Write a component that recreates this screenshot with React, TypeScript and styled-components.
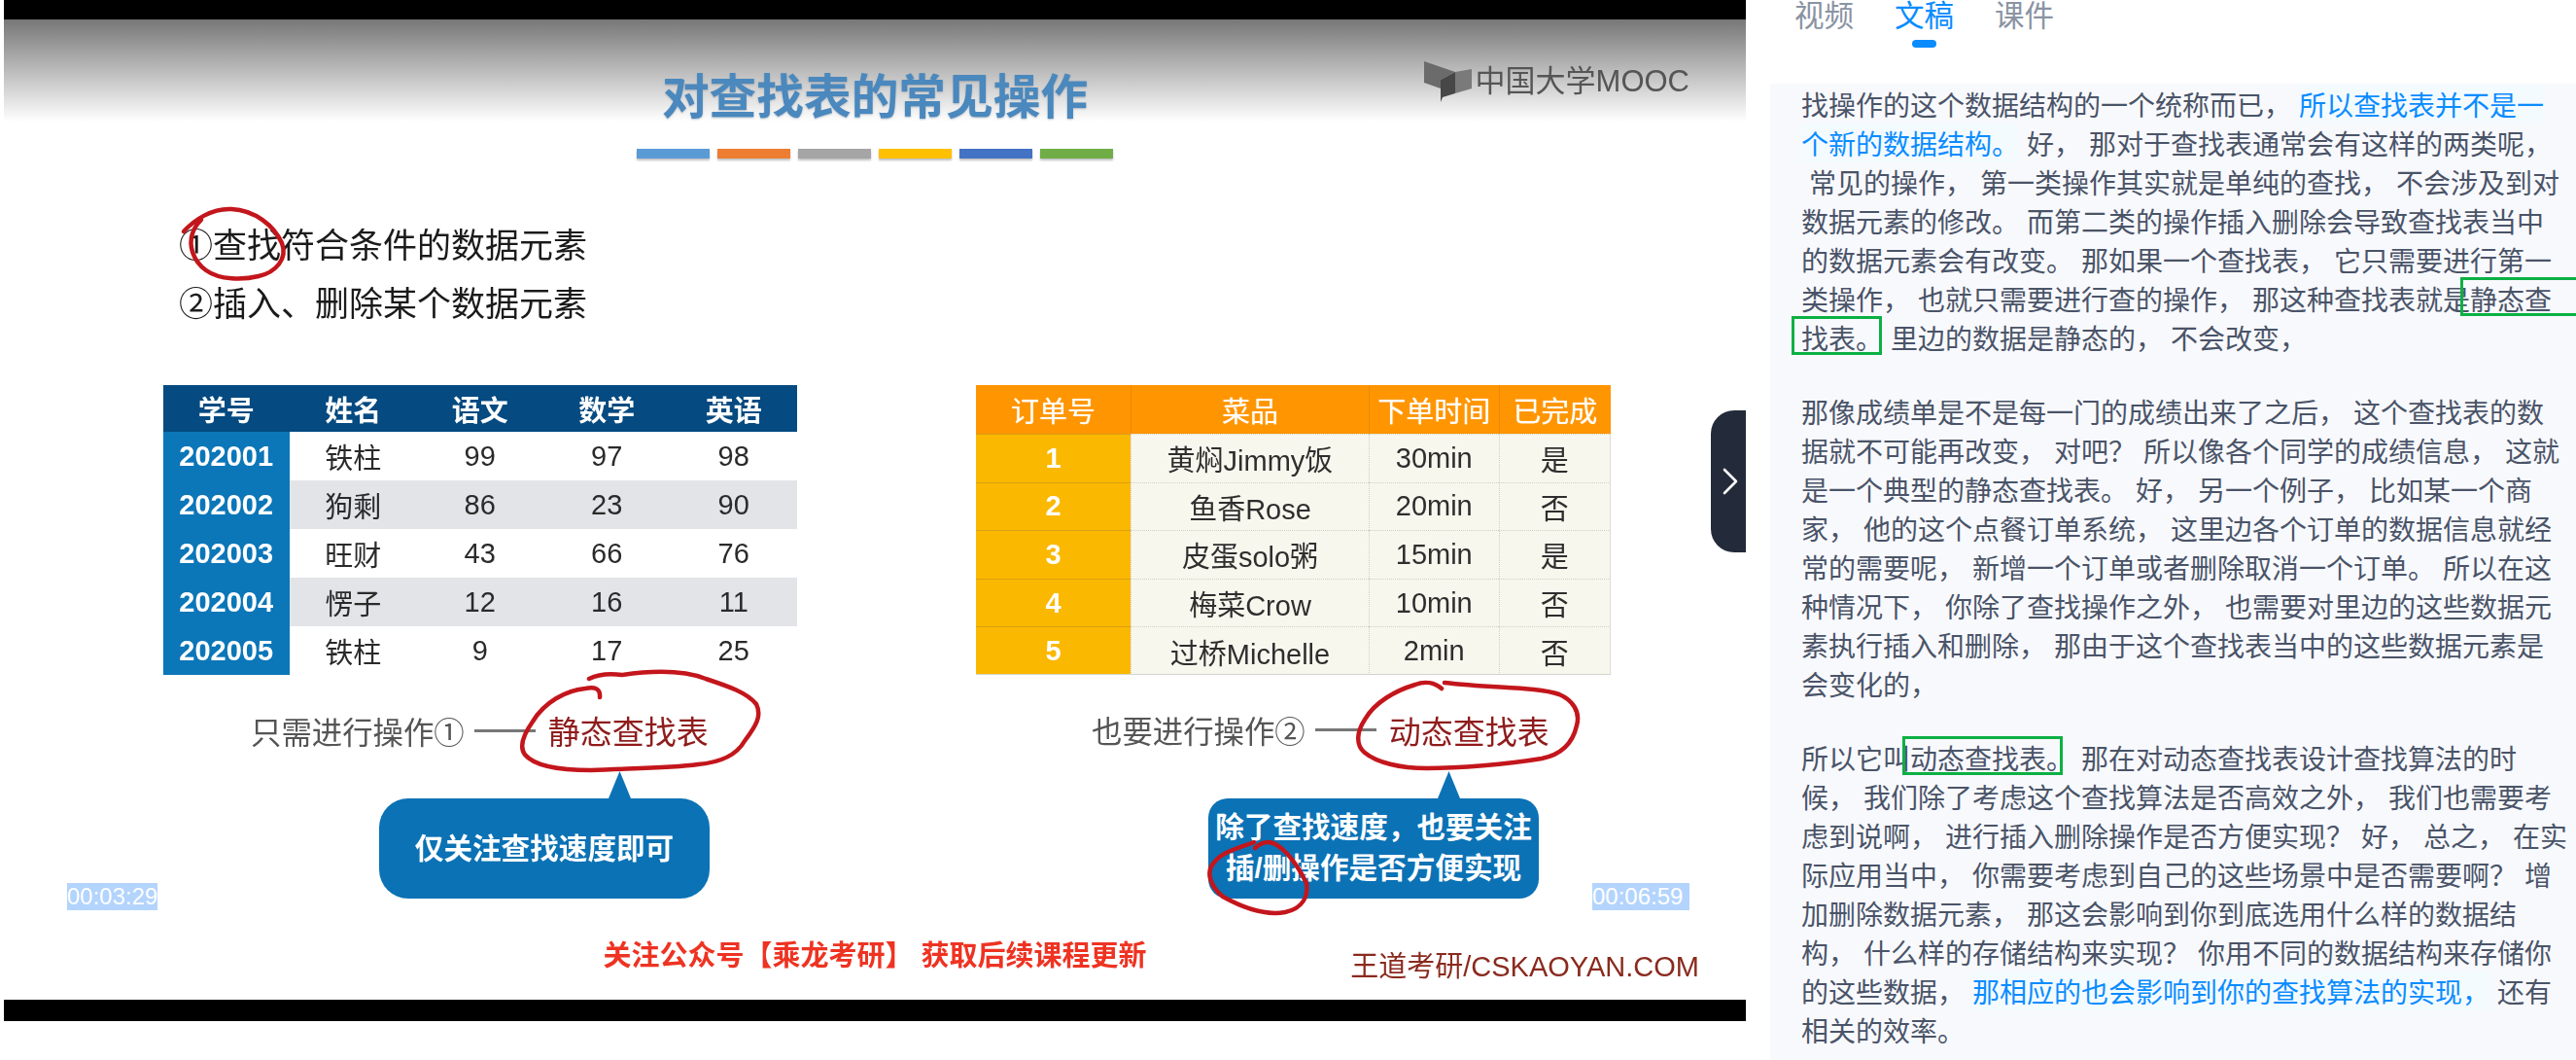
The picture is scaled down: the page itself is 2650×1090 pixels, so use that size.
import React from 'react';
import styled, { createGlobalStyle } from 'styled-components';
import { ChevronRight } from 'lucide-react';

const SLIDE_FONT = '"Liberation Sans", "Noto Sans CJK SC", sans-serif';
const PANEL_FONT = '"Noto Sans CJK SC", sans-serif';

// transcript copy is kept with ascii marks, the page shows the full width ones
const t = (s: string) => s.replace(/,/g, '\uFF0C').replace(/\?/g, '\uFF1F');

const GlobalStyle = createGlobalStyle`
  html, body {
    margin: 0;
    padding: 0;
    background: #fff;
  }
`;

const Page = styled.div`
  width: 2650px;
  height: 1090px;
  display: flex;
  overflow: hidden;
  background: #fff;
`;

const Video = styled.div`
  position: relative;
  flex: 0 0 1792px;
  height: 1050px;
  margin-left: 4px;
  box-sizing: border-box;
  border-top: 20px solid #000;
  border-bottom: 22px solid #000;
  font-family: ${SLIDE_FONT};
  background: linear-gradient(#777 0, #fff 105px);
`;

const SlideContent = styled.div`
  display: flex;
  flex-direction: column;
  height: 100%;
  filter: blur(0.6px);
`;

const SlideHeader = styled.div`
  display: grid;
  grid-template-columns: 1fr auto 1fr;
  align-items: start;
`;

const SlideTitle = styled.h1`
  margin: 56px 0 0;
  font-size: 48.7px;
  line-height: 48px;
  font-weight: 700;
  color: #4a88bd;
  text-shadow: 0 1px 2px rgba(60, 90, 120, 0.35);
`;

const Brand = styled.div`
  grid-column: 3;
  justify-self: end;
  display: flex;
  align-items: center;
  gap: 4px;
  margin: 42px 58px 0 0;
  font-size: 31px;
  line-height: 44px;
  color: #555;
  svg {
    display: block;
  }
`;

const BarRow = styled.div`
  display: flex;
  justify-content: center;
  gap: 8px;
  margin-top: 29px;
`;

const ColorBar = styled.div<{ $color: string }>`
  width: 75px;
  height: 10px;
  background: ${(p) => p.$color};
  box-shadow: 0 2px 2px rgba(0, 0, 0, 0.25);
`;

const Points = styled.ol`
  list-style: none;
  margin: 60px 0 0;
  padding: 0 0 0 180px;
  font-size: 35px;
  line-height: 60px;
  color: #1b1b1b;
`;

const Columns = styled.div`
  display: grid;
  grid-template-columns: 652.5px 653px;
  column-gap: 184px;
  margin: 53px 0 0 163.5px;
`;

const TableColumn = styled.div`
  display: flex;
  flex-direction: column;
  align-items: flex-start;
`;

const ScoreGrid = styled.div`
  display: grid;
  width: 100%;
  grid-template-columns: repeat(5, 1fr);
  grid-template-rows: 48px repeat(5, 50px);
  font-size: 29px;
  color: #2a2a2a;
`;

const ScoreHead = styled.div`
  display: flex;
  align-items: center;
  justify-content: center;
  background: #054a80;
  color: #fff;
  font-weight: 700;
`;

const ScoreId = styled.div`
  display: flex;
  align-items: center;
  justify-content: center;
  background: #0b76b8;
  color: #fff;
  font-weight: 700;
`;

const ScoreCell = styled.div<{ $shaded: boolean }>`
  display: flex;
  align-items: center;
  justify-content: center;
  background: ${(p) => (p.$shaded ? '#e3e4e8' : '#fff')};
`;

const OrderGrid = styled.div`
  display: grid;
  width: 100%;
  grid-template-columns: 159px 245px 133.5px 115.5px;
  grid-template-rows: 50px repeat(5, 49.6px);
  font-size: 29px;
  color: #2e2e2e;
`;

const OrderHead = styled.div`
  display: flex;
  align-items: center;
  justify-content: center;
  background: #ff9500;
  color: #fff;
  text-shadow: 0 0 1px rgba(255, 255, 255, 0.7);
  border-left: 1px solid #e98a08;
  &:first-child {
    border-left: none;
  }
`;

const OrderId = styled.div`
  display: flex;
  align-items: center;
  justify-content: center;
  background: #fbb800;
  color: #fff;
  font-weight: 700;
  border-top: 1px solid #d9a012;
`;

const OrderCell = styled.div`
  display: flex;
  align-items: center;
  justify-content: center;
  background: #f8f7ee;
  border-top: 1px dotted #cfcfc6;
  border-left: 1px dotted #cfcfc6;
  &:nth-child(4n) {
    border-right: 1px solid #dcdcd4;
  }
`;

const OrderFoot = styled.div`
  grid-column: 1 / -1;
  height: 1px;
  margin-top: -1px;
  background: #d4d4cc;
`;

const Caption = styled.div<{ $indent: number }>`
  display: flex;
  align-items: center;
  height: 60px;
  margin: 27px 0 40px ${(p) => p.$indent}px;
  font-size: 31.4px;
  color: #555;
  white-space: nowrap;
`;

const CaptionDash = styled.span`
  width: 63px;
  height: 3px;
  margin: 0 13px 0 10px;
  background: #777;
`;

const CaptionTerm = styled.strong`
  font-weight: 400;
  font-size: 33px;
  color: #8f1c1c;
`;

const Callout = styled.div<{ $indent: number; $radius: number }>`
  position: relative;
  box-sizing: border-box;
  width: 340px;
  height: 103px;
  margin-left: ${(p) => p.$indent}px;
  display: flex;
  align-items: center;
  justify-content: center;
  border-radius: ${(p) => p.$radius}px;
  background: #0b72b5;
  color: #fff;
  font-size: 29.6px;
  font-weight: 700;
  line-height: 42px;
  text-align: center;
  white-space: nowrap;
  &::before {
    content: '';
    position: absolute;
    left: 236px;
    top: -28px;
    width: 23px;
    height: 28px;
    background: #0b72b5;
    clip-path: polygon(50% 0, 100% 100%, 0 100%);
  }
`;

const SlideFooter = styled.div`
  display: grid;
  grid-template-columns: 1fr auto 1fr;
  align-items: start;
  margin-top: 43px;
`;

const FollowNote = styled.div`
  grid-column: 2;
  font-size: 29px;
  line-height: 32px;
  font-weight: 700;
  color: #ee3322;
  white-space: nowrap;
`;

const Credit = styled.div`
  justify-self: end;
  margin: 11px 48px 0 0;
  font-size: 29px;
  line-height: 32px;
  color: #8a2a1e;
  white-space: nowrap;
`;

const InkLayer = styled.svg`
  position: absolute;
  left: 0;
  top: -20px;
  pointer-events: none;
`;

const Timestamp = styled.span<{ $left: number; $width: number }>`
  position: absolute;
  left: ${(p) => p.$left}px;
  top: 888px;
  box-sizing: border-box;
  width: ${(p) => p.$width}px;
  height: 28px;
  background: #b3d4fd;
  color: #fff;
  font-size: 24px;
  line-height: 28px;
`;

const Handle = styled.button`
  position: absolute;
  right: 0;
  top: 402px;
  width: 36px;
  height: 146px;
  padding: 0 0 0 3px;
  border: none;
  border-radius: 24px 0 0 24px;
  background: #232a39;
  color: #fff;
  display: flex;
  align-items: center;
  justify-content: center;
  svg {
    flex-shrink: 0;
  }
`;

const Side = styled.aside`
  flex: 1;
  min-width: 0;
  font-family: ${PANEL_FONT};
`;

const Tabs = styled.nav`
  height: 86px;
  display: flex;
  gap: 42px;
  padding-left: 50px;
`;

const Tab = styled.div<{ $active?: boolean }>`
  position: relative;
  height: 28px;
  font-size: 30.5px;
  line-height: 28px;
  color: ${(p) => (p.$active ? '#0a8cff' : '#8a93a3')};
  ${(p) =>
    p.$active &&
    `&::after {
      content: '';
      position: absolute;
      left: 18px;
      top: 41px;
      width: 25px;
      height: 8px;
      border-radius: 4px;
      background: #0a8cff;
    }`}
`;

const Transcript = styled.div`
  margin-left: 24.5px;
  height: 1004px;
  box-sizing: border-box;
  padding: 1px 0 0 32.5px;
  background: #f8f9fd;
  font-size: 28px;
  line-height: 40px;
  color: #4a5468;
  word-spacing: 1.7px;
`;

const Paragraph = styled.p`
  margin: 0 0 36px;
`;

const Line = styled.div`
  white-space: pre;
`;

const Emphasis = styled.span`
  color: #0a8cff;
  background: #f4fbff;
`;

const Boxed = styled.span<{ $l: number; $r: number; $open?: boolean }>`
  position: relative;
  &::after {
    content: '';
    position: absolute;
    left: ${(p) => p.$l}px;
    right: ${(p) => p.$r}px;
    top: -2px;
    bottom: 2px;
    border: 3px solid #0cb044;
    ${(p) => p.$open && 'border-right: none;'}
    pointer-events: none;
  }
`;

const scoreRows = [
  ['202001', '铁柱', '99', '97', '98'],
  ['202002', '狗剩', '86', '23', '90'],
  ['202003', '旺财', '43', '66', '76'],
  ['202004', '愣子', '12', '16', '11'],
  ['202005', '铁柱', '9', '17', '25'],
];

const orderRows = [
  ['1', '黄焖Jimmy饭', '30min', '是'],
  ['2', '鱼香Rose', '20min', '否'],
  ['3', '皮蛋solo粥', '15min', '是'],
  ['4', '梅菜Crow', '10min', '否'],
  ['5', '过桥Michelle', '2min', '否'],
];

const barColors = ['#5b9bd5', '#ed7d31', '#a5a5a5', '#ffc000', '#4472c4', '#70ad47'];

const secondParagraph = [
  '那像成绩单是不是每一门的成绩出来了之后, 这个查找表的数',
  '据就不可能再改变, 对吧? 所以像各个同学的成绩信息, 这就',
  '是一个典型的静态查找表。 好, 另一个例子, 比如某一个商',
  '家, 他的这个点餐订单系统, 这里边各个订单的数据信息就经',
  '常的需要呢, 新增一个订单或者删除取消一个订单。 所以在这',
  '种情况下, 你除了查找操作之外, 也需要对里边的这些数据元',
  '素执行插入和删除, 那由于这个查找表当中的这些数据元素是',
  '会变化的,',
];

const thirdParagraph = [
  '候, 我们除了考虑这个查找算法是否高效之外, 我们也需要考',
  '虑到说啊, 进行插入删除操作是否方便实现? 好, 总之, 在实',
  '际应用当中, 你需要考虑到自己的这些场景中是否需要啊? 增',
  '加删除数据元素, 那这会影响到你到底选用什么样的数据结',
  '构, 什么样的存储结构来实现? 你用不同的数据结构来存储你',
];

const MoocMark = () => (
  <svg width="50" height="44" viewBox="1461 62 50 44">
    <polygon points="1462,63 1494,74 1479,82 1479,91 1462,85" fill="#6b6b6b" />
    <polygon points="1494,74 1511,71 1511,91 1494,96" fill="#7a7a7a" />
    <polygon points="1479,82 1494,74 1494,96 1481,100 1479,105" fill="#474747" />
  </svg>
);

const RedInk = () => (
  <InkLayer width="1792" height="1050" viewBox="4 0 1792 1050" fill="none" stroke="#c3161c" strokeWidth="4.5" strokeLinecap="round" strokeLinejoin="round">
    <path d="M189 238C200 226 218 214 238 215C262 216 282 232 290 250C296 266 284 280 266 284C250 288 226 288 212 278C198 268 194 252 198 240C200 234 203 230 207 226" />
    <path d="M617 717C618 708 612 706 602 708C582 710 560 722 548 742C538 756 534 768 540 776C550 788 576 792 608 792C650 790 690 790 718 786C742 784 758 776 766 762C778 746 784 736 778 724C768 712 750 706 726 698C700 688 668 690 640 694C626 692 614 694 606 698" />
    <path d="M1483 708C1476 702 1466 700 1456 704C1436 710 1414 722 1404 740C1396 752 1394 766 1404 774C1416 784 1440 790 1468 790C1500 790 1550 786 1586 780C1606 776 1618 764 1622 746C1626 732 1618 720 1604 714C1580 706 1536 708 1486 702" />
    <path d="M1291 872C1298 866 1304 864 1312 868C1326 876 1336 892 1344 908C1346 922 1340 934 1322 938C1300 942 1276 932 1258 922C1246 912 1240 898 1248 888C1256 876 1274 872 1290 866" />
  </InkLayer>
);

const App = () => (
  <Page>
    <GlobalStyle />
    <Video>
      <SlideContent>
        <SlideHeader>
          <span />
          <SlideTitle>对查找表的常见操作</SlideTitle>
          <Brand>
            <MoocMark />
            中国大学MOOC
          </Brand>
        </SlideHeader>
        <BarRow>
          {barColors.map((c) => (
            <ColorBar key={c} $color={c} />
          ))}
        </BarRow>
        <Points>
          <li>①查找符合条件的数据元素</li>
          <li>②插入、删除某个数据元素</li>
        </Points>
        <Columns>
          <TableColumn>
            <ScoreGrid>
              {['学号', '姓名', '语文', '数学', '英语'].map((h) => (
                <ScoreHead key={h}>{h}</ScoreHead>
              ))}
              {scoreRows.map((row, i) =>
                row.map((v, j) =>
                  j === 0 ? (
                    <ScoreId key={v}>{v}</ScoreId>
                  ) : (
                    <ScoreCell key={`${i}-${j}`} $shaded={i % 2 === 1}>
                      {v}
                    </ScoreCell>
                  ),
                ),
              )}
            </ScoreGrid>
            <Caption $indent={90.5}>
              只需进行操作①
              <CaptionDash />
              <CaptionTerm>静态查找表</CaptionTerm>
            </Caption>
            <Callout $indent={222.5} $radius={30}>
              仅关注查找速度即可
            </Callout>
          </TableColumn>
          <TableColumn>
            <OrderGrid>
              {['订单号', '菜品', '下单时间', '已完成'].map((h) => (
                <OrderHead key={h}>{h}</OrderHead>
              ))}
              {orderRows.map((row) =>
                row.map((v, j) =>
                  j === 0 ? (
                    <OrderId key={v}>{v}</OrderId>
                  ) : (
                    <OrderCell key={`${row[0]}-${j}`}>{v}</OrderCell>
                  ),
                ),
              )}
              <OrderFoot />
            </OrderGrid>
            <Caption $indent={119}>
              也要进行操作②
              <CaptionDash />
              <CaptionTerm>动态查找表</CaptionTerm>
            </Caption>
            <Callout $indent={239} $radius={20}>
              <div>
                {t('除了查找速度,也要关注')}
                <br />
                插/删操作是否方便实现
              </div>
            </Callout>
          </TableColumn>
        </Columns>
        <SlideFooter>
          <span />
          <FollowNote>关注公众号【乘龙考研】 获取后续课程更新</FollowNote>
          <Credit>王道考研/CSKAOYAN.COM</Credit>
        </SlideFooter>
        <RedInk />
      </SlideContent>
      <Timestamp $left={65} $width={93}>00:03:29</Timestamp>
      <Timestamp $left={1634} $width={100}>00:06:59</Timestamp>
      <Handle aria-label="收起">
        <ChevronRight size={48} strokeWidth={1.3} />
      </Handle>
    </Video>
    <Side>
      <Tabs>
        <Tab>视频</Tab>
        <Tab $active>文稿</Tab>
        <Tab>课件</Tab>
      </Tabs>
      <Transcript>
        <Paragraph>
          <Line>
            {t('找操作的这个数据结构的一个统称而已, ')}
            <Emphasis>所以查找表并不是一</Emphasis>
          </Line>
          <Line>
            <Emphasis>个新的数据结构。</Emphasis>
            {t(' 好, 那对于查找表通常会有这样的两类呢,')}
          </Line>
          <Line>{t(' 常见的操作, 第一类操作其实就是单纯的查找, 不会涉及到对')}</Line>
          <Line>数据元素的修改。 而第二类的操作插入删除会导致查找表当中</Line>
          <Line>{t('的数据元素会有改变。 那如果一个查找表, 它只需要进行第一')}</Line>
          <Line>
            {t('类操作, 也就只需要进行查的操作, 那这种查找表就是')}
            <Boxed $l={-10} $r={-40} $open>静态查</Boxed>
          </Line>
          <Line>
            <Boxed $l={-10} $r={1}>找表。</Boxed>
            {t(' 里边的数据是静态的, 不会改变,')}
          </Line>
        </Paragraph>
        <Paragraph>
          {secondParagraph.map((line) => (
            <Line key={line}>{t(line)}</Line>
          ))}
        </Paragraph>
        <Paragraph>
          <Line>
            所以它叫<Boxed $l={-8} $r={11}>动态查找表。</Boxed> 那在对动态查找表设计查找算法的时
          </Line>
          {thirdParagraph.map((line) => (
            <Line key={line}>{t(line)}</Line>
          ))}
          <Line>
            {t('的这些数据, ')}
            <Emphasis>{t('那相应的也会影响到你的查找算法的实现,')}</Emphasis>
            {' 还有'}
          </Line>
          <Line>相关的效率。</Line>
        </Paragraph>
      </Transcript>
    </Side>
  </Page>
);

export default App;
